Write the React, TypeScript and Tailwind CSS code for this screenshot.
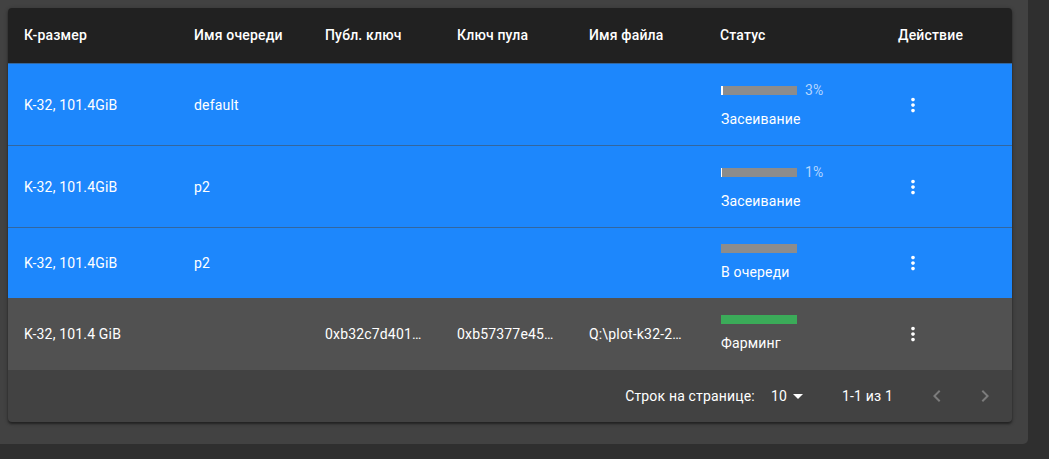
import React from "react";

type Row = {
  size: string;
  queue: string;
  pub: string;
  pool: string;
  file: string;
  status: string;
  progress?: number;
  green?: boolean;
  blue: boolean;
};

const rows: Row[] = [
  { size: "K-32, 101.4GiB", queue: "default", pub: "", pool: "", file: "", status: "Засеивание", progress: 3, blue: true },
  { size: "K-32, 101.4GiB", queue: "p2", pub: "", pool: "", file: "", status: "Засеивание", progress: 1, blue: true },
  { size: "K-32, 101.4GiB", queue: "p2", pub: "", pool: "", file: "", status: "В очереди", blue: true },
  {
    size: "K-32, 101.4 GiB",
    queue: "",
    pub: "0xb32c7d401…",
    pool: "0xb57377e45…",
    file: "Q:\\plot-k32-2…",
    status: "Фарминг",
    green: true,
    blue: false,
  },
];

function MoreVert() {
  return (
    <svg width="22" height="22" viewBox="0 0 24 24" fill="#ffffff">
      <path d="M12 8c1.1 0 2-.9 2-2s-.9-2-2-2-2 .9-2 2 .9 2 2 2zm0 2c-1.1 0-2 .9-2 2s.9 2 2 2 2-.9 2-2-.9-2-2-2zm0 6c-1.1 0-2 .9-2 2s.9 2 2 2 2-.9 2-2-.9-2-2-2z" />
    </svg>
  );
}

function Bar({ progress, green }: { progress?: number; green?: boolean }) {
  if (green) return <div className="h-[9px] w-[76px] bg-[#3bab59]" />;
  return (
    <div className="flex h-[9px] w-[76px] bg-[#8c8c8c]">
      {progress !== undefined && (
        <div className="h-full bg-white" style={{ width: `${Math.max(1, (progress / 100) * 76)}px` }} />
      )}
    </div>
  );
}

const grid = "grid grid-cols-[170px_131px_132px_132px_131px_178px_130px]";

export default function App() {
  return (
    <div
      className="w-[1049px] h-[459px] bg-[#2f2f2f] overflow-hidden tracking-[0.01071em]"
      style={{ fontFamily: "Roboto, 'Noto Sans', sans-serif" }}
    >
      <div className="w-[1028px] h-[444px] bg-[#424242] rounded-br-[5px] pt-2 pl-2 pr-4">
        <div className="w-[1004px] bg-[#424242] rounded-[4px] overflow-hidden shadow-[0_2px_2px_rgba(0,0,0,0.35),0_1px_4px_rgba(0,0,0,0.3)]">
          {/* header */}
          <div className={`${grid} h-[56px] bg-[#212121] border-b border-[#33679f] text-white text-[14px] font-medium`}>
            {["К-размер", "Имя очереди", "Публ. ключ", "Ключ пула", "Имя файла", "Статус", "Действие"].map((h) => (
              <div key={h} className="px-4 flex items-center">
                {h}
              </div>
            ))}
          </div>
          {rows.map((r, i) => (
            <div
              key={i}
              className={`${grid} text-[14px] text-white border-b ${
                r.blue ? "bg-[#1d87fc]" : "bg-[#515151]"
              } ${i === 1 || i === 0 ? "border-[#33679f]" : "border-[#515151]"}`}
            >
              <div className="px-4 flex items-center leading-5">{r.size}</div>
              <div className="px-4 flex items-center leading-5">{r.queue}</div>
              <div className="px-4 flex items-center leading-5 whitespace-nowrap">{r.pub}</div>
              <div className="px-4 flex items-center leading-5 whitespace-nowrap">{r.pool}</div>
              <div className="px-4 flex items-center leading-5 whitespace-nowrap">{r.file}</div>
              <div className="pl-[17px] pr-4 py-4 flex flex-col">
                {r.progress !== undefined ? (
                  <div className="h-5 flex items-center">
                    <Bar progress={r.progress} />
                    <span className="ml-2 text-[14px] text-[#b4d6ff] leading-5">{r.progress}%</span>
                  </div>
                ) : (
                  <Bar green={r.green} />
                )}
                <div className="mt-[9px] leading-5">{r.status}</div>
              </div>
              <div className="px-4 flex items-center">
                <span className="ml-[4px] flex">
                  <MoreVert />
                </span>
              </div>
            </div>
          ))}
          {/* footer */}
          <div className="h-[52px] flex items-center justify-end pr-[3px] text-[14px] text-white">
            <span>Строк на странице:</span>
            <div className="ml-[16px] mr-8 flex items-center">
              <span>10</span>
              <svg width="24" height="24" viewBox="0 0 24 24" fill="#ffffff" className="-ml-[1px]">
                <path d="M7 10l5 5 5-5z" />
              </svg>
            </div>
            <span>1-1 из 1</span>
            <div className="ml-5 flex">
              <div className="w-12 h-12 flex items-center justify-center">
                <svg width="24" height="24" viewBox="0 0 24 24" fill="rgba(255,255,255,0.3)">
                  <path d="M15.41 16.59 10.83 12l4.58-4.59L14 6l-6 6 6 6 1.41-1.41z" />
                </svg>
              </div>
              <div className="w-12 h-12 flex items-center justify-center">
                <svg width="24" height="24" viewBox="0 0 24 24" fill="rgba(255,255,255,0.3)">
                  <path d="M8.59 16.59 13.17 12 8.59 7.41 10 6l6 6-6 6-1.41-1.41z" />
                </svg>
              </div>
            </div>
          </div>
        </div>
      </div>
    </div>
  );
}
